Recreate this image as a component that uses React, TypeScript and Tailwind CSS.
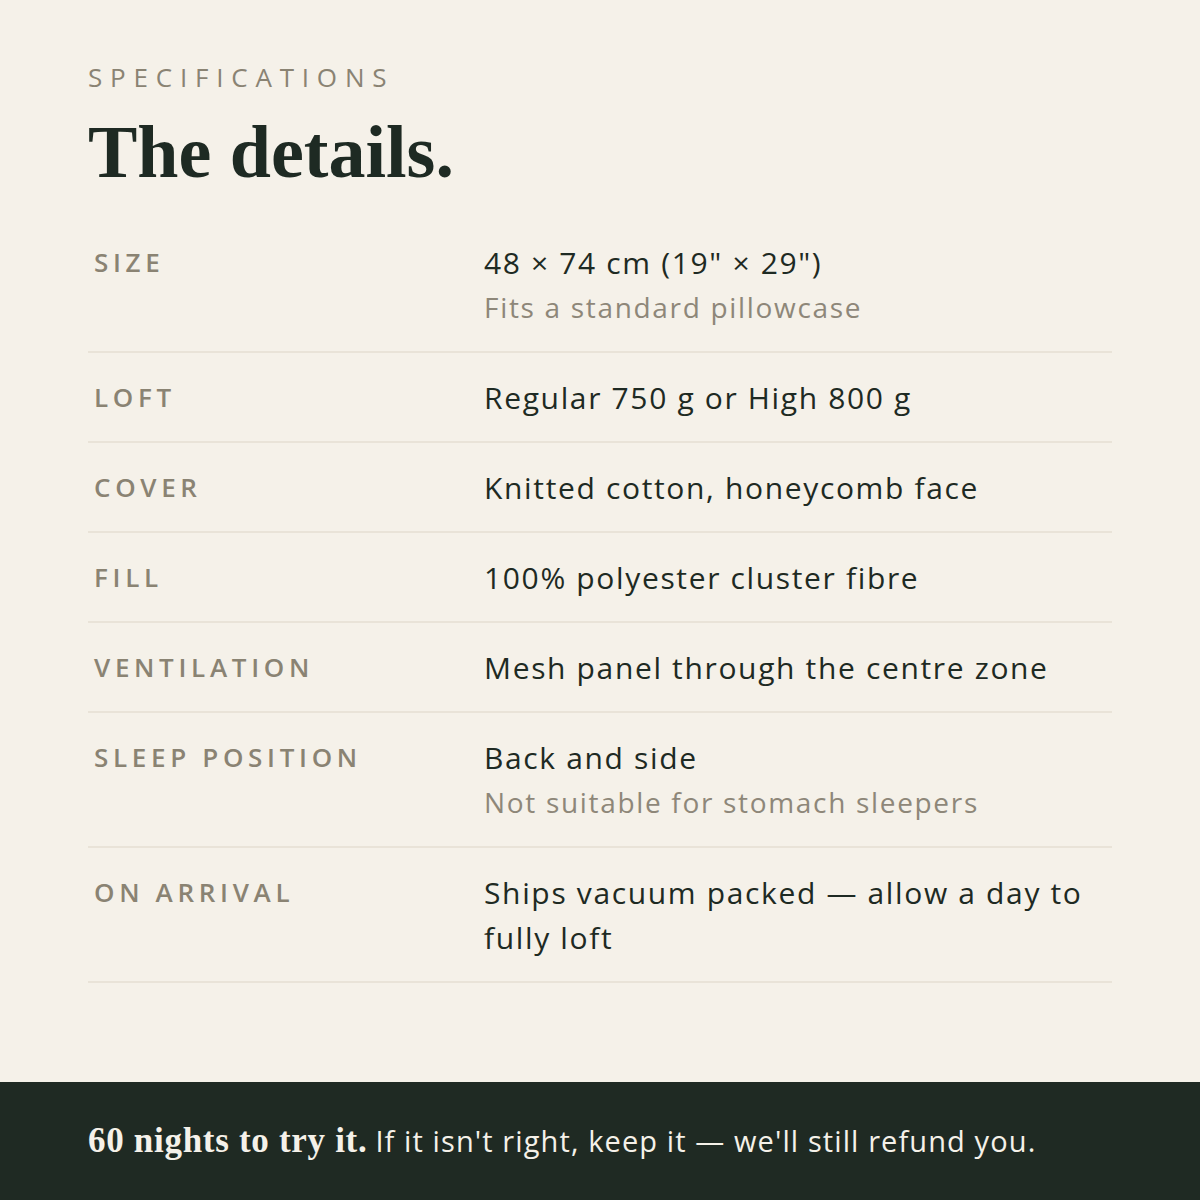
import React from "react";

const rows = [
  { label: "SIZE", value: "48 × 74 cm (19\" × 29\")", note: "Fits a standard pillowcase" },
  { label: "LOFT", value: "Regular 750 g or High 800 g" },
  { label: "COVER", value: "Knitted cotton, honeycomb face" },
  { label: "FILL", value: "100% polyester cluster fibre" },
  { label: "VENTILATION", value: "Mesh panel through the centre zone" },
  { label: "SLEEP POSITION", value: "Back and side", note: "Not suitable for stomach sleepers" },
  { label: "ON ARRIVAL", value: "Ships vacuum packed — allow a day to fully loft" },
];

function SpecRow({ label, value, note }: { label: string; value: string; note?: string }) {
  return (
    <div className="grid grid-cols-[396px_1fr] border-b-2 border-[#e9e3d8] pt-[22px] pb-[21px]">
      <div className="pl-[6px] text-[26px] leading-[45px] font-semibold tracking-[0.18em] text-[#8a8373]">
        {label}
      </div>
      <div className="pr-[20px]">
        <div className="text-[30px] leading-[45px] tracking-[0.055em] text-[#1e2a23]">{value}</div>
        {note && (
          <div className="text-[28px] leading-[45px] tracking-[0.06em] text-[#8e8779]">{note}</div>
        )}
      </div>
    </div>
  );
}

export default function App() {
  return (
    <div className="flex h-[1200px] w-[1200px] flex-col bg-[#f5f1e9] font-['Open_Sans',sans-serif]">
      <div className="flex-1 px-[88px] pt-[62px]">
        <div className="text-[26px] leading-[30px] font-medium tracking-[0.3em] text-[#8a8373]">
          SPECIFICATIONS
        </div>
        <h1 className="mt-[20px] font-['Liberation_Serif',serif] text-[74px] leading-[80px] font-bold text-[#1e2a23]">
          The details.
        </h1>
        <div className="mt-[26px] w-[1024px]">
          {rows.map((r) => (
            <SpecRow key={r.label} {...r} />
          ))}
        </div>
      </div>
      <div className="flex h-[118px] items-center bg-[#1f2a23] px-[88px] text-[29px] text-[#f5f1e9]">
        <span className="font-['Liberation_Serif',serif] text-[35px] font-bold tracking-[0.02em]">
          60 nights to try it.
        </span>
        <span className="ml-[8px] tracking-[0.038em]">If it isn't right, keep it — we'll still refund you.</span>
      </div>
    </div>
  );
}
